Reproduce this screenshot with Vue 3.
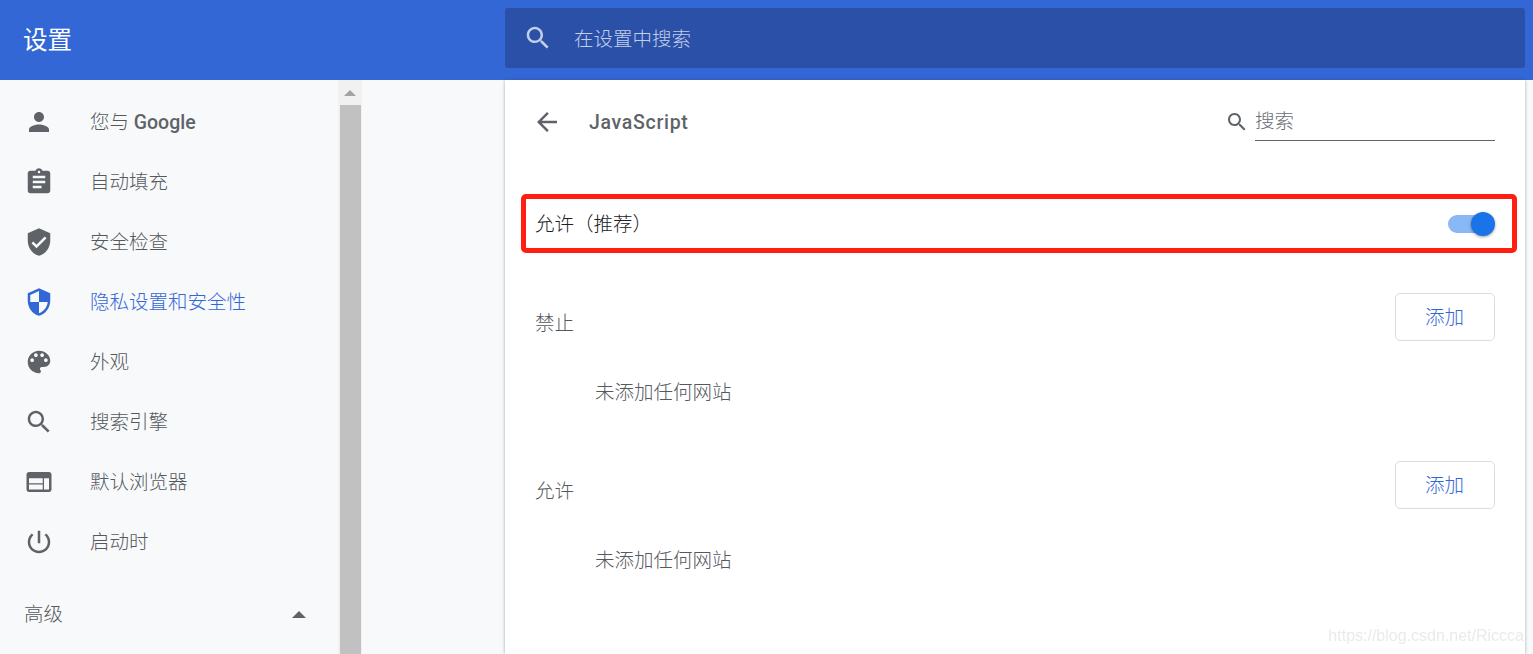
<script setup>
const navItems = [
  { label: '您与 ', latin: 'Google', d: 'M12 12c2.21 0 4-1.79 4-4s-1.79-4-4-4-4 1.79-4 4 1.79 4 4 4zm0 2c-2.67 0-8 1.34-8 4v2h16v-2c0-2.66-5.33-4-8-4z' },
  { label: '自动填充', d: 'M19 3h-4.18C14.4 1.84 13.3 1 12 1c-1.3 0-2.4.84-2.82 2H5c-1.1 0-2 .9-2 2v14c0 1.1.9 2 2 2h14c1.1 0 2-.9 2-2V5c0-1.1-.9-2-2-2zm-7 0c.55 0 1 .45 1 1s-.45 1-1 1-1-.45-1-1 .45-1 1-1zm2 14H7v-2h7v2zm3-4H7v-2h10v2zm0-4H7V7h10v2z' },
  { label: '安全检查', d: 'M12 1L3 5v6c0 5.55 3.84 10.74 9 12 5.16-1.26 9-6.45 9-12V5l-9-4zm-2 16l-4-4 1.41-1.41L10 14.17l6.59-6.59L18 9l-8 8z' },
  { label: '隐私设置和安全性', active: true, d: 'M12 1L3 5v6c0 5.55 3.84 10.74 9 12 5.16-1.26 9-6.45 9-12V5l-9-4zm0 10.99h7c-.53 4.12-3.28 7.79-7 8.94V12H5V6.3l7-3.11v8.8z' },
  { label: '外观', d: 'M12 3c-4.97 0-9 4.03-9 9s4.03 9 9 9c.83 0 1.5-.67 1.5-1.5 0-.39-.15-.74-.39-1.01-.23-.26-.38-.61-.38-.99 0-.83.67-1.5 1.5-1.5H16c2.76 0 5-2.24 5-5 0-4.42-4.03-8-9-8zm-5.5 9c-.83 0-1.5-.67-1.5-1.5S5.67 9 6.5 9 8 9.67 8 10.5 7.33 12 6.5 12zm3-4C8.67 8 8 7.33 8 6.5S8.67 5 9.5 5s1.5.67 1.5 1.5S10.33 8 9.5 8zm5 0c-.83 0-1.5-.67-1.5-1.5S13.67 5 14.5 5s1.5.67 1.5 1.5S15.33 8 14.5 8zm3 4c-.83 0-1.5-.67-1.5-1.5S16.67 9 17.5 9s1.5.67 1.5 1.5-.67 1.5-1.5 1.5z' },
  { label: '搜索引擎', d: 'M15.5 14h-.79l-.28-.27C15.41 12.59 16 11.11 16 9.5 16 5.91 13.09 3 9.5 3S3 5.91 3 9.5 5.91 16 9.5 16c1.61 0 3.09-.59 4.23-1.57l.27.28v.79l5 4.99L20.49 19l-4.99-5zm-6 0C7.01 14 5 11.99 5 9.5S7.01 5 9.5 5 14 7.01 14 9.5 11.99 14 9.5 14z' },
  { label: '默认浏览器', d: 'M20 4H4c-1.1 0-1.99.9-1.99 2L2 18c0 1.1.9 2 2 2h16c1.1 0 2-.9 2-2V6c0-1.1-.9-2-2-2zm-5 14H4v-4h11v4zm0-5H4V9h11v4zm5 5h-4V9h4v9z' },
  { label: '启动时', d: 'M13 3h-2v10h2V3zm4.83 2.17l-1.42 1.42C17.99 7.86 19 9.81 19 12c0 3.87-3.13 7-7 7s-7-3.13-7-7c0-2.19 1.01-4.14 2.58-5.42L6.17 5.17C4.23 6.82 3 9.26 3 12c0 4.97 4.03 9 9 9s9-4.03 9-9c0-2.74-1.23-5.18-3.17-6.83z' },
]
const searchPath = navItems[5].d
const sections = [{ title: '禁止' }, { title: '允许' }]
</script>

<template>
  <div class="page">
    <header class="topbar">
      <h1 class="brand">设置</h1>
      <div class="global-search">
        <svg class="global-search-icon" viewBox="0 0 24 24"><path :d="searchPath" /></svg>
        <span class="global-search-text">在设置中搜索</span>
      </div>
    </header>

    <div class="body">
      <aside class="sidebar">
        <nav class="nav">
          <div v-for="item in navItems" :key="item.label" class="nav-item" :class="{ active: item.active }">
            <svg class="nav-icon" viewBox="0 0 24 24"><path :d="item.d" /></svg>
            <span class="nav-label">{{ item.label }}<b v-if="item.latin" class="latin">{{ item.latin }}</b></span>
          </div>
        </nav>
        <div class="advanced">
          <span class="nav-label">高级</span>
          <svg class="advanced-arrow" viewBox="0 0 14 7"><path d="M0 7L7 0l7 7z" /></svg>
        </div>
      </aside>

      <div class="scrollbar">
        <div class="scroll-up"><i class="scroll-arrow"></i></div>
        <div class="scroll-thumb"></div>
      </div>

      <main class="main">
        <section class="card">
          <div class="card-head">
            <svg class="back" viewBox="0 0 24 24"><path d="M20 11H7.83l5.59-5.59L12 4l-8 8 8 8 1.41-1.41L7.83 13H20v-2z" /></svg>
            <h2 class="title">JavaScript</h2>
            <div class="local-search">
              <svg class="local-search-icon" viewBox="0 0 24 24"><path :d="searchPath" /></svg>
              <div class="local-search-field">搜索</div>
            </div>
          </div>

          <div class="allow-row">
            <span class="allow-label">允许（推荐）</span>
            <div class="toggle"><div class="toggle-track"></div><div class="toggle-knob"></div></div>
          </div>

          <div v-for="s in sections" :key="s.title" class="section">
            <div class="section-head">
              <span class="section-title">{{ s.title }}</span>
              <button class="add-btn">添加</button>
            </div>
            <div class="empty">未添加任何网站</div>
          </div>
        </section>
      </main>
    </div>

    <div class="watermark">https://blog.csdn.net/Riccca</div>
  </div>
</template>

<style>
html, body { margin: 0; background: #f8f9fa; overflow: hidden; }
</style>

<style scoped>
.page {
  position: relative;
  width: 1533px;
  height: 654px;
  overflow: hidden;
  background: #f8f9fa;
  font-family: Roboto, "Noto Sans CJK SC", sans-serif;
  font-size: 19.5px;
  font-weight: 300;
  color: #55595e;
}
.topbar {
  height: 80px;
  background: #3367d6;
  display: flex;
  align-items: flex-start;
  box-sizing: border-box;
  padding: 8px 8px 0 24px;
}
.brand {
  margin: 3px 0 0 -1px;
  width: 482px;
  font-size: 24.5px;
  line-height: 60px;
  height: 57px;
  font-weight: 400;
  color: #fff;
}
.global-search {
  width: 1020px;
  height: 60px;
  border-radius: 3px;
  background: #2a50a8;
  display: flex;
  align-items: center;
  padding-left: 18px;
  box-sizing: border-box;
}
.global-search-icon { width: 30px; height: 30px; fill: #c2cfe9; }
.global-search-text { margin: 0 0 2px 21px; color: #c2cfe9; }
.body { display: flex; height: 574px; }
.sidebar { width: 338px; flex: none; }
.nav { padding-top: 12px; }
.nav-item {
  height: 60px;
  display: flex;
  align-items: center;
  padding-left: 24px;
}
.nav-label { margin: 0 0 4px 0; }
.latin { font-weight: 500; color: #5f6368; }
.nav-icon { width: 30px; height: 30px; margin-right: 36px; fill: #5f6368; flex: none; }
.nav-item.active { color: #3367d6; }
.nav-item.active .nav-icon { fill: #3367d6; }
.advanced {
  margin-top: 12px;
  height: 60px;
  display: flex;
  align-items: center;
  justify-content: space-between;
  padding: 0 32px 0 24px;
}
.advanced-arrow { width: 14px; height: 7px; fill: #5f6368; }
.scrollbar {
  width: 24px;
  flex: none;
  background: #f1f1f1;
  display: flex;
  flex-direction: column;
  align-items: center;
}
.scroll-up { height: 25px; width: 100%; display: flex; justify-content: center; padding-top: 10px; box-sizing: border-box; }
.scroll-arrow {
  width: 0;
  height: 0;
  border-left: 6px solid transparent;
  border-right: 6px solid transparent;
  border-bottom: 6px solid #a3a3a3;
}
.scroll-thumb { width: 21px; flex: 1; background: #c1c1c1; }
.main { flex: 1; padding-left: 143px; }
.card {
  width: 1020px;
  height: 574px;
  box-sizing: border-box;
  background: #fff;
  padding: 0 30px;
  box-shadow: 0 0 3px rgba(60, 64, 67, 0.45);
}
.card-head { height: 84px; display: flex; align-items: center; }
.back { width: 30px; height: 30px; fill: #5f6368; margin-left: -3px; margin-right: 27px; }
.title { margin: 0; font-size: 19.5px; font-weight: 500; color: #5f6368; letter-spacing: 0.7px; }
.local-search { margin-left: auto; display: flex; align-items: flex-start; height: 60px; }
.local-search-icon { width: 24px; height: 24px; fill: #5f6368; margin: 18px 6px 0 0; }
.local-search-field {
  width: 240px;
  height: 35px;
  margin-top: 14px;
  box-sizing: border-box;
  border-bottom: 1px solid #5f6368;
  line-height: 32px;
  color: #6a6e73;
}
.allow-row {
  margin: 30px -22px 0 -14px;
  height: 59px;
  box-sizing: border-box;
  border: 5px solid #ff1e10;
  border-radius: 5px;
  padding: 0 17px 0 9px;
  display: flex;
  align-items: center;
  justify-content: space-between;
  color: #202124;
}
.allow-label { margin: 0 0 2px 0; }
.toggle { position: relative; width: 47px; height: 24px; }
.toggle-track {
  position: absolute;
  left: 0;
  top: 3px;
  width: 42px;
  height: 18px;
  border-radius: 9px;
  background: #8ab8f5;
}
.toggle-knob {
  position: absolute;
  right: 0;
  top: 0;
  width: 24px;
  height: 24px;
  border-radius: 50%;
  background: #1a73e8;
  box-shadow: 0 1px 3px rgba(0, 0, 0, 0.4);
}
.section { margin-bottom: 54px; }
.allow-row + .section { margin-top: 40px; }
.section-head { display: flex; justify-content: space-between; align-items: flex-end; height: 48px; }
.section-title { line-height: 28px; margin: 0 0 3px 0; }
.add-btn {
  width: 100px;
  height: 48px;
  box-sizing: border-box;
  background: #fff;
  border: 1px solid #dadce0;
  border-radius: 5px;
  font: inherit;
  color: #3367d6;
  padding: 0 1px 4px 0;
}
.empty { margin: 38px 0 0 60px; line-height: 28px; }
.watermark {
  position: absolute;
  right: 9px;
  bottom: 8px;
  font-family: "Liberation Sans", sans-serif;
  font-size: 16px;
  line-height: 20px;
  color: #eaeaea;
  white-space: nowrap;
  filter: blur(0.4px);
}
</style>
